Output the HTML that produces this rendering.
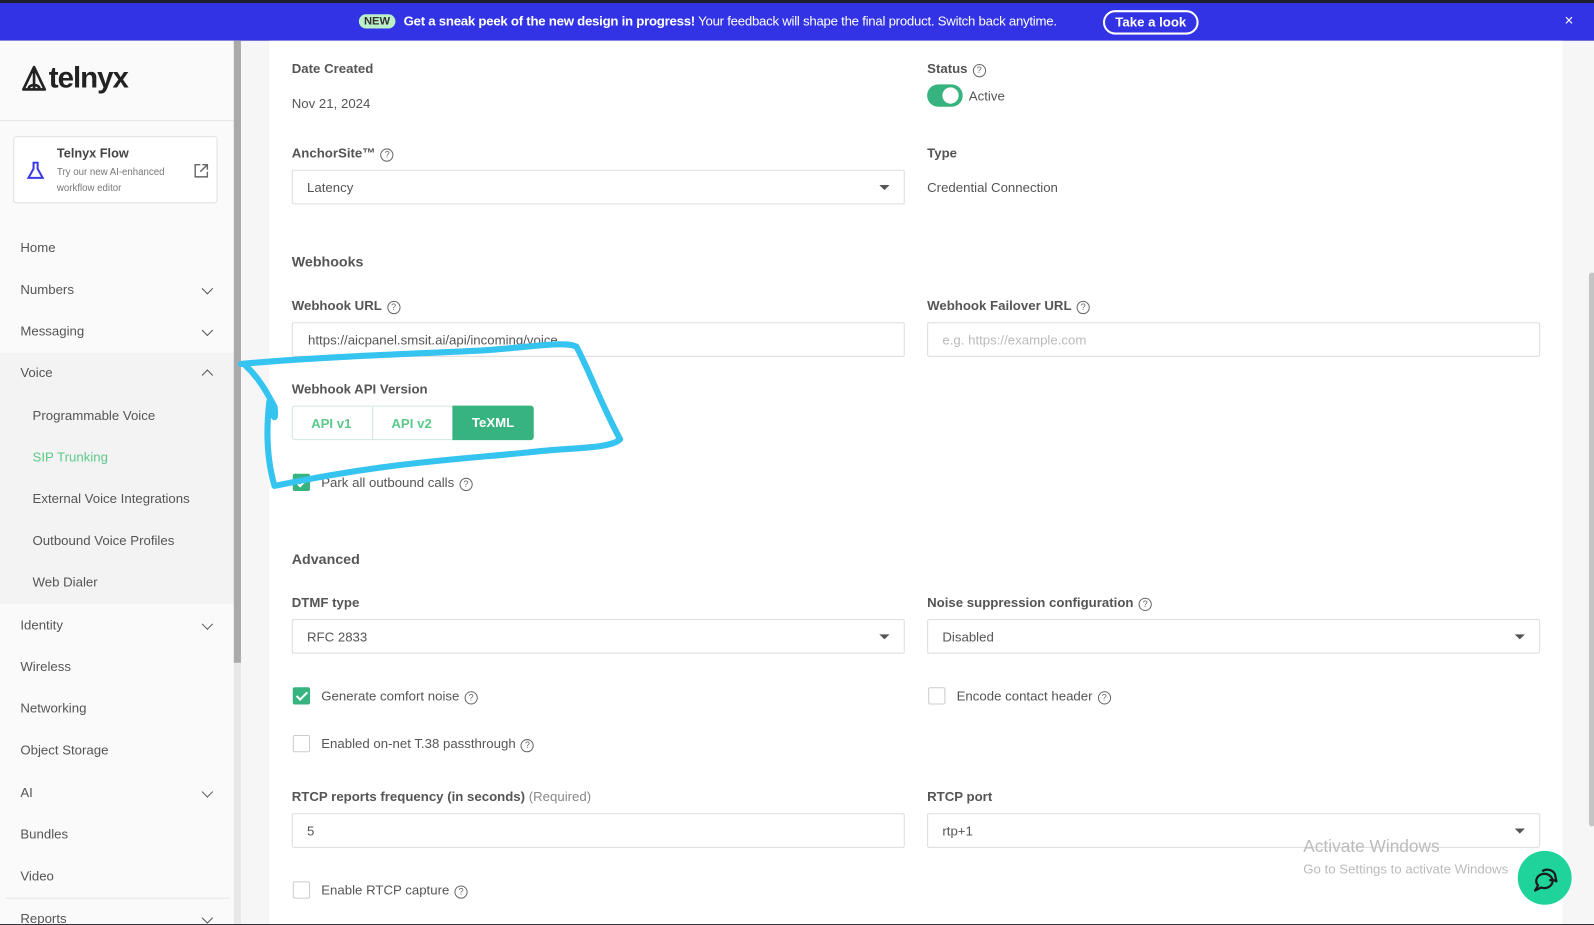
<!DOCTYPE html>
<html><head><meta charset="utf-8"><style>
*{box-sizing:border-box;margin:0;padding:0}
body{width:1594px;height:925px;overflow:hidden;background:#1e1e2a;font-family:"Liberation Sans",sans-serif;color:#444;position:relative;font-size:13px}
#wrap{position:absolute;left:0;top:0;width:1568px;height:910px;transform:scale(1.01659);transform-origin:0 0}
.abs{position:absolute}
#top{left:0;top:0;width:1568px;height:3px;background:#1e1d2e}
#ban{left:0;top:3px;width:1568px;height:37px;background:#3333e6;color:#fff;font-size:13px}
#page{left:0;top:40px;width:1568px;height:869px;background:#f6f6f6;overflow:hidden}
#side{left:0;top:0;width:230px;height:869px;background:#fafafa}
.nav{position:absolute;left:20px;font-size:13px;color:#555}
.sub{left:32px}
.chev{position:absolute;left:200px;width:8px;height:8px;border-right:1.6px solid #555;border-bottom:1.6px solid #555;transform:rotate(45deg)}
.up{transform:rotate(-135deg)}
#card{left:265px;top:0;width:1272px;height:869px;background:#fff}
.lbl{position:absolute;font-size:13px;font-weight:bold;color:#555;white-space:nowrap}
.txt{position:absolute;font-size:13px;color:#555;white-space:nowrap}
.inp{position:absolute;height:34px;border:1px solid #ddd;border-radius:2px;background:#fff;font-size:13px;color:#555;padding:9px 14px}
.tri{position:absolute;right:14px;top:14px;border-left:5px solid transparent;border-right:5px solid transparent;border-top:5px solid #555}
.q{display:inline-block;width:13px;height:13px;border:1.3px solid #666;border-radius:50%;font-size:9px;text-align:center;line-height:11px;color:#666;vertical-align:0px;margin-left:5px;font-weight:normal}
.cb{position:absolute;width:17px;height:17px;border:1.5px solid #ccc;border-radius:2px;background:#fff}
.cb.on{background:#36b37e;border-color:#36b37e}
.cb.on:after{content:"";position:absolute;left:5px;top:1px;width:4px;height:9px;border-right:2px solid #fff;border-bottom:2px solid #fff;transform:rotate(45deg)}
</style></head><body>
<div id="wrap">
<div id="top" class="abs"></div>
<div id="ban" class="abs">
 <span class="abs" style="left:353px;top:11px;background:#b9f0c8;color:#333;font-size:11px;font-weight:bold;border-radius:9px;padding:1px 5px">NEW</span>
 <span class="abs" style="left:397px;top:10px;white-space:nowrap;letter-spacing:-0.25px"><b>Get a sneak peek of the new design in progress!</b> Your feedback will shape the final product. Switch back anytime.</span>
 <span class="abs" style="left:1085px;top:7px;width:94px;height:24px;border:2px solid #fff;border-radius:12px;font-weight:bold;text-align:center;line-height:20px">Take a look</span>
 <span class="abs" style="left:1539px;top:9px;font-size:15px">×</span>
</div>
<div id="page" class="abs">
 <div id="side" class="abs">
  <svg class="abs" style="left:20px;top:24px" width="27" height="26" viewBox="0 0 27 26"><path d="M13.5 2L3 24h21z M13.5 2v22 M8 24c0-6 11-6 11 0" fill="none" stroke="#222" stroke-width="2.6" stroke-linejoin="round"/></svg>
  <div class="abs" style="left:48px;top:21px;font-size:29px;font-weight:bold;color:#222;letter-spacing:-1px">telnyx</div>
  <div class="abs" style="left:0;top:78px;width:230px;height:1px;background:#e6e6e6"></div>
  <div class="abs" style="left:13px;top:94px;width:201px;height:66px;border:1px solid #e2e2e2;border-radius:3px;background:#fff">
   <svg class="abs" style="left:12px;top:24px" width="18" height="18" viewBox="0 0 18 18"><path d="M6 1h6M7 1v6L2 16h14L11 7V1" fill="none" stroke="#3b3be6" stroke-width="2"/></svg>
   <div class="abs" style="left:42px;top:9px;font-weight:bold;font-size:12.5px;color:#444">Telnyx Flow</div>
   <div class="abs" style="left:42px;top:27px;font-size:9.5px;color:#777;line-height:16px">Try our new AI-enhanced<br>workflow editor</div>
   <svg class="abs" style="left:177px;top:26px" width="14" height="14" viewBox="0 0 14 14"><path d="M6 1H1v12h12V8M8 1h5v5M13 1L6 8" fill="none" stroke="#666" stroke-width="1.4"/></svg>
  </div>
  <div class="abs" style="left:0;top:307px;width:230px;height:247px;background:#f3f3f3"></div>
  <div class="nav" style="top:196px">Home</div>
  <div class="nav" style="top:237px">Numbers</div><div class="chev" style="top:240px"></div>
  <div class="nav" style="top:278px">Messaging</div><div class="chev" style="top:281px"></div>
  <div class="nav" style="top:319px">Voice</div><div class="chev up" style="top:325px"></div>
  <div class="nav sub" style="top:361px">Programmable Voice</div>
  <div class="nav sub" style="top:402px;color:#5cc98a">SIP Trunking</div>
  <div class="nav sub" style="top:443px;width:158px;overflow:hidden;white-space:nowrap">External Voice Integrations</div>
  <div class="nav sub" style="top:484px">Outbound Voice Profiles</div>
  <div class="nav sub" style="top:525px">Web Dialer</div>
  <div class="nav" style="top:567px">Identity</div><div class="chev" style="top:570px"></div>
  <div class="nav" style="top:608px">Wireless</div>
  <div class="nav" style="top:649px">Networking</div>
  <div class="nav" style="top:690px">Object Storage</div>
  <div class="nav" style="top:732px">AI</div><div class="chev" style="top:735px"></div>
  <div class="nav" style="top:773px">Bundles</div>
  <div class="nav" style="top:814px">Video</div>
  <div class="abs" style="left:6px;top:843px;width:220px;height:1px;background:#e6e6e6"></div>
  <div class="nav" style="top:856px">Reports</div><div class="chev" style="top:859px"></div>
 </div>
 <div class="abs" style="left:230px;top:0;width:7px;height:869px;background:#e8e8e8"></div>
 <div class="abs" style="left:230px;top:0;width:7px;height:612px;background:#aaa"></div>
 <div class="abs" style="left:1563px;top:228px;width:6px;height:545px;background:#c4c4c4;border-radius:3px"></div>
 <div id="card" class="abs">
  <div class="lbl" style="left:22px;top:20px">Date Created</div>
  <div class="txt" style="left:22px;top:54px">Nov 21, 2024</div>
  <div class="lbl" style="left:647px;top:20px">Status<span class="q">?</span></div>
  <div class="abs" style="left:647px;top:43px;width:35px;height:22px;border-radius:11px;background:#36b37e"><div class="abs" style="left:15px;top:3px;width:16px;height:16px;border-radius:50%;background:#fff"></div></div>
  <div class="txt" style="left:688px;top:47px">Active</div>
  <div class="lbl" style="left:22px;top:103px">AnchorSite™<span class="q">?</span></div>
  <div class="inp" style="left:22px;top:127px;width:603px">Latency<div class="tri"></div></div>
  <div class="lbl" style="left:647px;top:103px">Type</div>
  <div class="txt" style="left:647px;top:137px">Credential Connection</div>
  <div class="lbl" style="left:22px;top:209px;font-size:14px">Webhooks</div>
  <div class="lbl" style="left:22px;top:253px">Webhook URL<span class="q">?</span></div>
  <div class="inp" style="left:22px;top:277px;width:603px;padding-left:15px">https://aicpanel.smsit.ai/api/incoming/voice</div>
  <div class="lbl" style="left:647px;top:253px">Webhook Failover URL<span class="q">?</span></div>
  <div class="inp" style="left:647px;top:277px;width:603px;color:#bbb">e.g. https://example.com</div>
  <div class="lbl" style="left:22px;top:335px">Webhook API Version</div>
  <div class="abs" style="left:22px;top:359px;width:238px;height:34px;border:1px solid #cfe9dc;border-radius:3px;font-weight:bold;color:#5cc98a">
   <span class="abs" style="left:18px;top:9px">API v1</span>
   <div class="abs" style="left:78px;top:0;width:1px;height:32px;background:#cfe9dc"></div>
   <span class="abs" style="left:97px;top:9px">API v2</span>
   <div class="abs" style="left:157px;top:-1px;width:80px;height:34px;background:#36b37e;color:#fff;border-radius:0 3px 3px 0;text-align:center;line-height:34px">TeXML</div>
  </div>
  <div class="cb on" style="left:23px;top:426px"></div>
  <div class="txt" style="left:51px;top:427px">Park all outbound calls<span class="q">?</span></div>
  <div class="lbl" style="left:22px;top:502px;font-size:14px">Advanced</div>
  <div class="lbl" style="left:22px;top:545px">DTMF type</div>
  <div class="inp" style="left:22px;top:569px;width:603px">RFC 2833<div class="tri"></div></div>
  <div class="lbl" style="left:647px;top:545px">Noise suppression configuration<span class="q">?</span></div>
  <div class="inp" style="left:647px;top:569px;width:603px">Disabled<div class="tri"></div></div>
  <div class="cb on" style="left:23px;top:636px"></div>
  <div class="txt" style="left:51px;top:637px">Generate comfort noise<span class="q">?</span></div>
  <div class="cb" style="left:648px;top:636px"></div>
  <div class="txt" style="left:676px;top:637px">Encode contact header<span class="q">?</span></div>
  <div class="cb" style="left:23px;top:683px"></div>
  <div class="txt" style="left:51px;top:684px">Enabled on-net T.38 passthrough<span class="q">?</span></div>
  <div class="lbl" style="left:22px;top:736px">RTCP reports frequency (in seconds) <span style="font-weight:normal;color:#888">(Required)</span></div>
  <div class="inp" style="left:22px;top:760px;width:603px">5</div>
  <div class="lbl" style="left:647px;top:736px">RTCP port</div>
  <div class="inp" style="left:647px;top:760px;width:603px">rtp+1<div class="tri"></div></div>
  <div class="cb" style="left:23px;top:827px"></div>
  <div class="txt" style="left:51px;top:828px">Enable RTCP capture<span class="q">?</span></div>
  <div class="abs" style="left:1017px;top:783px;font-size:17px;color:#bbb;white-space:nowrap">Activate Windows</div>
  <div class="abs" style="left:1017px;top:807px;font-size:13px;color:#bbb;white-space:nowrap">Go to Settings to activate Windows</div>
 </div>
 <div class="abs" style="left:1493px;top:797px;width:53px;height:53px;border-radius:50%;background:#1ed49b">
  <svg class="abs" style="left:11px;top:11px" width="31" height="31" viewBox="0 0 31 31"><path d="M9 23l-3 5 6-3a8 7 0 1 0-3-2z" fill="none" stroke="#1a1a1a" stroke-width="2.2" stroke-linejoin="round"/><path d="M13 9a8 7 0 0 1 13 5l1 5-4-2a8 7 0 0 1-3 1" fill="none" stroke="#1a1a1a" stroke-width="2.2" stroke-linejoin="round"/></svg>
 </div>
</div>
<svg class="abs" style="left:0;top:0" width="1568" height="910"><path d="M237 358 C300 352 400 348 470 345 C520 342 555 335 567 341 C580 365 590 395 610 432 C600 442 560 440 520 445 C450 452 380 455 270 478 C262 450 262 420 265 395 C268 410 272 418 270 400 C262 385 255 372 240 358" fill="none" stroke="#35c3f0" stroke-width="6" stroke-linejoin="round" stroke-linecap="round"/></svg>
</div>
</body></html>
